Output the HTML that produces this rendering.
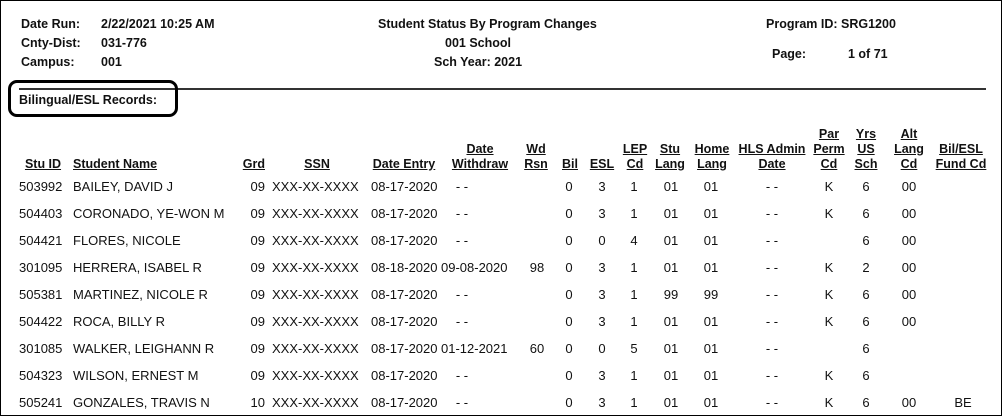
<!DOCTYPE html>
<html><head><meta charset="utf-8"><style>
*{margin:0;padding:0;box-sizing:border-box}
body{width:1002px;height:416px;background:#fff;position:relative;overflow:hidden;font-family:"Liberation Sans",sans-serif;color:#111}
.f{position:absolute;left:0;top:0;width:1002px;height:416px;border:1.5px solid #000}
.a{position:absolute;white-space:nowrap;font-size:12.5px;line-height:15px}
.b{font-weight:bold;font-family:"Liberation Sans",sans-serif;font-size:12.5px}
.c{width:120px;text-align:center;transform:translateX(-60px)}
.r{text-align:right;transform:translateX(-100%)}
.u{text-decoration:underline}
.d{font-family:"Liberation Sans",sans-serif;font-size:13px}
</style></head><body>
<div class="f"></div>
<div class="a b" style="left:21px;top:17px">Date Run:</div>
<div class="a b" style="left:101px;top:17px">2/22/2021 10:25 AM</div>
<div class="a b" style="left:21px;top:36px">Cnty-Dist:</div>
<div class="a b" style="left:101px;top:36px">031-776</div>
<div class="a b" style="left:21px;top:55px">Campus:</div>
<div class="a b" style="left:101px;top:55px">001</div>
<div class="a b" style="left:378px;top:17px;width:200px;text-align:center">Student Status By Program Changes</div>
<div class="a b" style="left:378px;top:36px;width:200px;text-align:center">001 School</div>
<div class="a b" style="left:378px;top:55px;width:200px;text-align:center">Sch Year: 2021</div>
<div class="a b" style="left:766px;top:17px">Program ID: SRG1200</div>
<div class="a b" style="left:772px;top:47px">Page:</div>
<div class="a b" style="left:848px;top:47px">1 of 71</div>
<div style="position:absolute;left:19px;top:88px;width:967px;height:2px;background:#333"></div>
<div style="position:absolute;left:8px;top:80px;width:170px;height:37px;border:3px solid #000;border-radius:9px"></div>
<div class="a b" style="left:19px;top:93px">Bilingual/ESL Records:</div>
<div id="rows"></div>
<script>
var H=[[43,["Stu ID"]],[961,["Bil/ESL","Fund Cd"]],[317,["SSN"]],[404,["Date Entry"]],[480,["Date","Withdraw"]],[536,["Wd","Rsn"]],[570,["Bil"]],[602,["ESL"]],[635,["LEP","Cd"]],[670,["Stu","Lang"]],[712,["Home","Lang"]],[772,["HLS Admin","Date"]],[829,["Par","Perm","Cd"]],[866,["Yrs","US","Sch"]],[909,["Alt","Lang","Cd"]]];
var s='';
H.forEach(function(h){var L=h[1];for(var i=0;i<L.length;i++){var y=157-(L.length-1-i)*15;s+='<div class="a b c" style="left:'+h[0]+'px;top:'+y+'px"><span class="u">'+L[i]+'</span></div>';}});
s+='<div class="a b u" style="left:73px;top:157px">Student Name</div>';
s+='<div class="a b r u" style="left:265px;top:157px">Grd</div>';
var R=[["503992","BAILEY, DAVID J","09","08-17-2020","- -","","0","3","1","01","01","K","6","00",""],
["504403","CORONADO, YE-WON M","09","08-17-2020","- -","","0","3","1","01","01","K","6","00",""],
["504421","FLORES, NICOLE","09","08-17-2020","- -","","0","0","4","01","01","","6","00",""],
["301095","HERRERA, ISABEL R","09","08-18-2020","09-08-2020","98","0","3","1","01","01","K","2","00",""],
["505381","MARTINEZ, NICOLE R","09","08-17-2020","- -","","0","3","1","99","99","K","6","00",""],
["504422","ROCA, BILLY R","09","08-17-2020","- -","","0","3","1","01","01","K","6","00",""],
["301085","WALKER, LEIGHANN R","09","08-17-2020","01-12-2021","60","0","0","5","01","01","","6","",""],
["504323","WILSON, ERNEST M","09","08-17-2020","- -","","0","3","1","01","01","K","6","",""],
["505241","GONZALES, TRAVIS N","10","08-17-2020","- -","","0","3","1","01","01","K","6","00","BE"]];
R.forEach(function(r,i){var y=179+i*27;
function c(x,t){s+='<div class="a d c" style="left:'+x+'px;top:'+y+'px">'+t+'</div>';}
function l(x,t){s+='<div class="a d" style="left:'+x+'px;top:'+y+'px">'+t+'</div>';}
l(19,r[0]);l(73,r[1]);s+='<div class="a d r" style="left:265px;top:'+y+'px">'+r[2]+'</div>';
l(272,"XXX-XX-XXXX");l(371,r[3]);
if(r[4]=="- -")c(462,r[4]);else l(441,r[4]);
c(537,r[5]);c(569,r[6]);c(602,r[7]);c(634,r[8]);c(671,r[9]);c(711,r[10]);c(772,"- -");c(829,r[11]);c(866,r[12]);c(909,r[13]);c(963,r[14]);});
document.getElementById('rows').innerHTML=s;
</script>
</body></html>
